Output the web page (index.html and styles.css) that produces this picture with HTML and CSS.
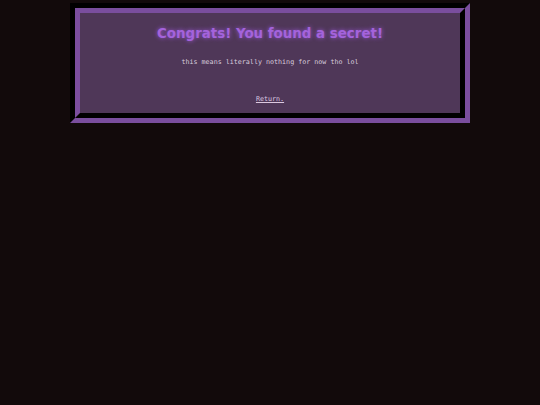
FILE: index.html
```html
<!DOCTYPE html>
<html>
<head>
<meta charset="utf-8">
<link rel="stylesheet" href="styles.css">
</head>
<body>
<div class="frame">
  <div class="panel">
    <h1 class="title">Congrats! You found a secret!</h1>
    <p class="note">this means literally nothing for now tho lol</p>
    <a class="back" href="#">Return.</a>
  </div>
</div>
</body>
</html>
```

FILE: styles.css
```css
html, body {
  margin: 0;
  padding: 0;
  background: #120a0b;
  height: 100%;
}
body {
  padding-top: 3px;
}
.frame {
  width: 390px;
  margin-left: 70px;
  border: 5px solid;
  border-color: #000 #7a4e9e #7a4e9e #000;
}
.panel {
  border: 5px solid;
  border-color: #7a4e9e #000 #000 #7a4e9e;
  background: #4f3758;
  height: 100px;
  display: flex;
  flex-direction: column;
  align-items: center;
}
.title {
  margin: 12px 0 0;
  font-family: "DejaVu Sans", sans-serif;
  font-weight: bold;
  font-size: 13.4px;
  line-height: 17px;
  color: #a463dc;
  text-shadow: 0 0 4px #9a58d6;
}
.note {
  margin: 16px 0 0;
  font-family: "DejaVu Sans Mono", monospace;
  font-size: 6.7px;
  line-height: 9px;
  color: #d8ccdc;
}
.back {
  margin-top: 28px;
  font-family: "DejaVu Sans Mono", monospace;
  font-size: 6.7px;
  line-height: 9px;
  color: #dcc8e0;
}
```
